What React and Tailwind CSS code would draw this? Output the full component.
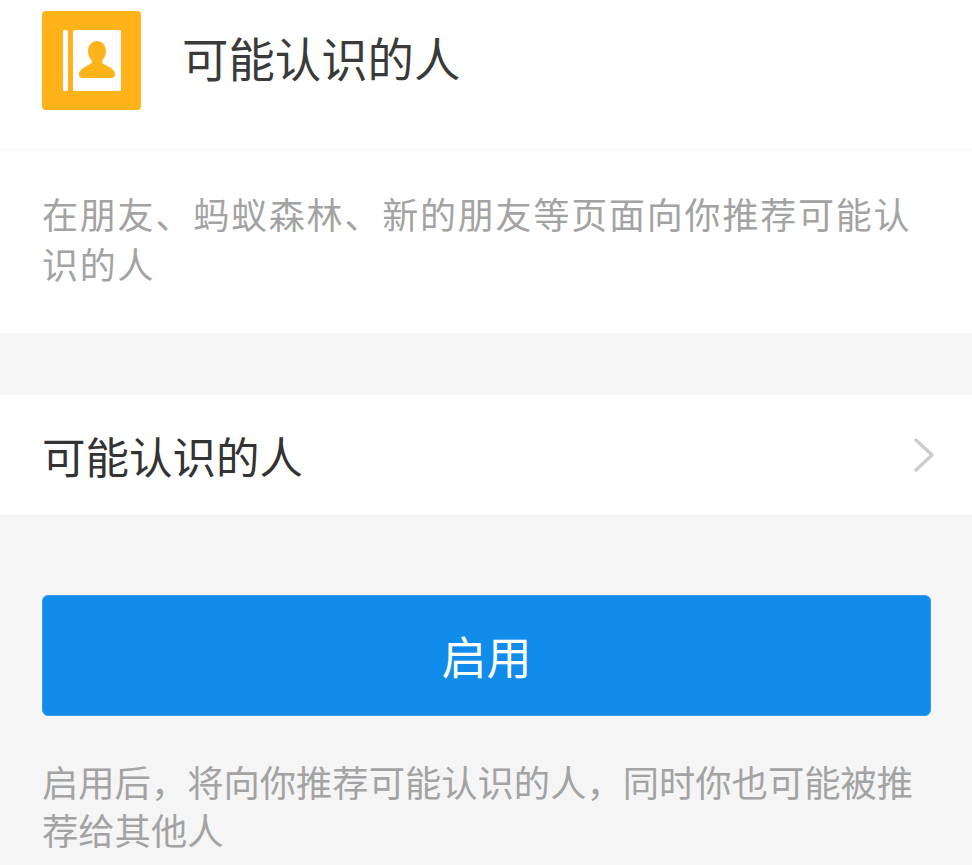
const cjk = "font-['Roboto','Noto_Sans_CJK_SC',sans-serif]";

const ContactIcon = () => (
  <div className="w-[99px] h-[99px] shrink-0 rounded-[4px] bg-[#ffb31a] flex items-center justify-center">
    <svg width="58" height="62" viewBox="0 0 58 62" fill="none">
      <rect x="0" y="0" width="5" height="61" rx="1.500" fill="#fff" />
      <rect x="10" y="0" width="48" height="61" rx="1.500" fill="#fff" />
      <path
        d="M34 11c5 0 9 4.500 9 10 0 4-1.500 7-3.500 9-1 1.200-.5 3 1 4 3 1.800 8 3.500 10.500 7 2 3 1 7-2.500 7H19.500c-3.500 0-4.500-4-2.500-7 2.500-3.500 7.500-5.200 10.500-7 1.500-1 2-2.800 1-4-2-2-3.500-5-3.500-9 0-5.500 4-10 9-10z"
        fill="#ffb31a"
      />
    </svg>
  </div>
);

export default function App() {
  return (
    <div className={`w-[972px] h-[865px] overflow-hidden bg-[#f5f5f5] ${cjk}`}>
      <div className="bg-white">
        <div className="h-[150px] pl-[42px] pb-[28px] flex items-center border-b border-[#f6f6f6]">
          <ContactIcon />
          <span className="ml-[41px] text-[46.400px] leading-[50px] text-[#3a3a3a]">可能认识的人</span>
        </div>
        <p className="h-[183px] px-[42px] pt-[42px] text-[36px] tracking-[1.800px] leading-[50px] text-[#a3a3a3]">
          在朋友、蚂蚁森林、新的朋友等页面向你推荐可能认识的人
        </p>
      </div>

      <div className="mt-[62px] h-[120px] bg-white pl-[42px] pr-[38px] flex items-center justify-between">
        <span className="pt-[9px] text-[43.500px] leading-[50px] text-[#333333]">可能认识的人</span>
        <svg width="20" height="34" viewBox="0 0 20 34" fill="none">
          <path d="M2 2l16 15L2 32" stroke="#cdcdcd" strokeWidth="3.500" strokeLinecap="round" strokeLinejoin="round" />
        </svg>
      </div>

      <div className="mt-[80px] mx-[42px] w-[889px] h-[121px] rounded-[6px] bg-[#118ceb] border border-[#3a9eee] flex items-center justify-center">
        <span className="pt-[9px] text-[45px] leading-[50px] text-white">启用</span>
      </div>

      <p className="mt-[45px] px-[42px] text-[36.300px] leading-[48px] text-[#a3a3a3]">
        启用后，将向你推荐可能认识的人，同时你也可能被推荐给其他人
      </p>
    </div>
  );
}
